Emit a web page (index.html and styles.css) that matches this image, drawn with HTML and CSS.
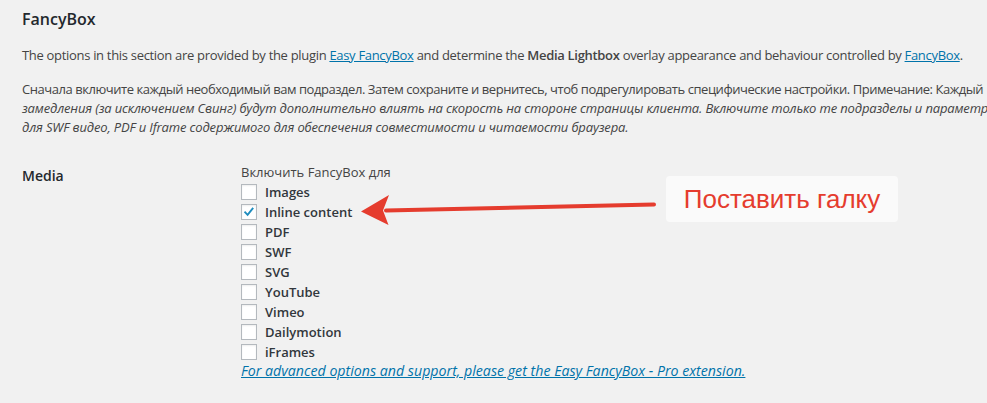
FILE: index.html
```html
<!DOCTYPE html>
<html lang="ru">
<head>
<meta charset="utf-8">
<title>FancyBox</title>
<link rel="stylesheet" href="styles.css">
</head>
<body>
<div class="wrap">
  <h2 class="title">FancyBox</h2>
  <p class="intro">The options in this section are provided by the plugin <a href="#">Easy FancyBox</a> and determine the <strong>Media Lightbox</strong> overlay appearance and behaviour controlled by <a href="#">FancyBox</a>.</p>
  <p class="note">
    <span class="line first">Сначала включите каждый необходимый вам подраздел. Затем сохраните и вернитесь, чтоб подрегулировать специфические настройки. Примечание: Каждый</span>
    <em class="line">замедления (за исключением Свинг) будут дополнительно влиять на скорость на стороне страницы клиента. Включите только те подразделы и параметры</em>
    <em class="line">для SWF видео, PDF и Iframe содержимого для обеспечения совместимости и читаемости браузера.</em>
  </p>
  <div class="form-row">
    <div class="th">Media</div>
    <div class="td">
      <div class="legend">Включить FancyBox для</div>
      <label class="opt"><span class="cb"></span>Images</label>
      <label class="opt"><span class="cb checked"><svg viewBox="0 0 16 16" width="16" height="16"><path d="M4.2 8.3 L6.6 10.9 L11.6 4.6" fill="none" stroke="#1e8cbe" stroke-width="1.9" stroke-linecap="square"/></svg></span>Inline content</label>
      <label class="opt"><span class="cb"></span>PDF</label>
      <label class="opt"><span class="cb"></span>SWF</label>
      <label class="opt"><span class="cb"></span>SVG</label>
      <label class="opt"><span class="cb"></span>YouTube</label>
      <label class="opt"><span class="cb"></span>Vimeo</label>
      <label class="opt"><span class="cb"></span>Dailymotion</label>
      <label class="opt"><span class="cb"></span>iFrames</label>
      <a class="pro" href="#">For advanced options and support, please get the Easy FancyBox - Pro extension.</a>
    </div>
  </div>
  <svg class="arrow" width="987" height="403" viewBox="0 0 987 403">
    <path d="M386 210.5 L654 204.5" stroke="#e53c2e" stroke-width="4" stroke-linecap="round" fill="none"/>
    <path d="M361 211.5 L389 195 L383 210.5 L388.5 225 Z" fill="#e53c2e"/>
  </svg>
  <div class="callout">Поставить галку</div>
</div>
</body>
</html>
```
FILE: styles.css
```css
html, body {
  margin: 0;
  padding: 0;
  background: #f1f1f1;
}
body {
  font-family: "Open Sans", "Noto Sans", sans-serif;
  font-size: 13px;
  color: #444;
  overflow: hidden;
  width: 987px;
  height: 403px;
}
.wrap {
  position: relative;
  padding: 0 0 0 22px;
  height: 403px;
}
.title {
  margin: 0;
  padding-top: 8px;
  font-size: 16px;
  line-height: 23px;
  font-weight: 600;
  color: #23282d;
}
.intro {
  margin: 15px 0 0;
  line-height: 19px;
  white-space: nowrap;
  letter-spacing: -0.31px;
}
.intro strong {
  font-weight: 600;
}
a {
  color: #0073aa;
  text-decoration: underline;
}
.note {
  margin: 15px 0 0;
  line-height: 19px;
  width: 1100px;
}
.line {
  display: block;
  white-space: nowrap;
  letter-spacing: -0.15px;
}
.line.first {
  letter-spacing: -0.45px;
}
.form-row {
  display: flex;
  margin-top: 25px;
}
.th {
  width: 219px;
  flex: none;
  font-weight: 600;
  font-size: 14px;
  color: #23282d;
  padding-top: 4px;
  line-height: 20px;
}
.td {
  display: flex;
  flex-direction: column;
  line-height: 20px;
}
.legend {
  line-height: 20px;
}
.opt {
  display: flex;
  align-items: center;
  height: 20px;
  font-weight: 600;
  color: #32373c;
}
.cb {
  box-sizing: border-box;
  width: 16px;
  height: 16px;
  border: 1px solid #b4b9be;
  background: #fff;
  box-shadow: inset 0 1px 2px rgba(0,0,0,0.07);
  margin-right: 8px;
  display: flex;
  align-items: center;
  justify-content: center;
}
.cb svg {
  display: block;
  margin: -1px;
}
.pro {
  font-style: italic;
  font-size: 14.2px;
  line-height: 18px;
}
.arrow {
  position: absolute;
  left: 0;
  top: 0;
  pointer-events: none;
}
.callout {
  position: absolute;
  left: 666px;
  top: 176px;
  width: 232px;
  height: 46px;
  box-sizing: border-box;
  background: #fafafa;
  border-radius: 4px;
  color: #e53c2e;
  font-family: "Liberation Sans", Arial, sans-serif;
  font-size: 26px;
  line-height: 46px;
  text-align: center;
}
```
